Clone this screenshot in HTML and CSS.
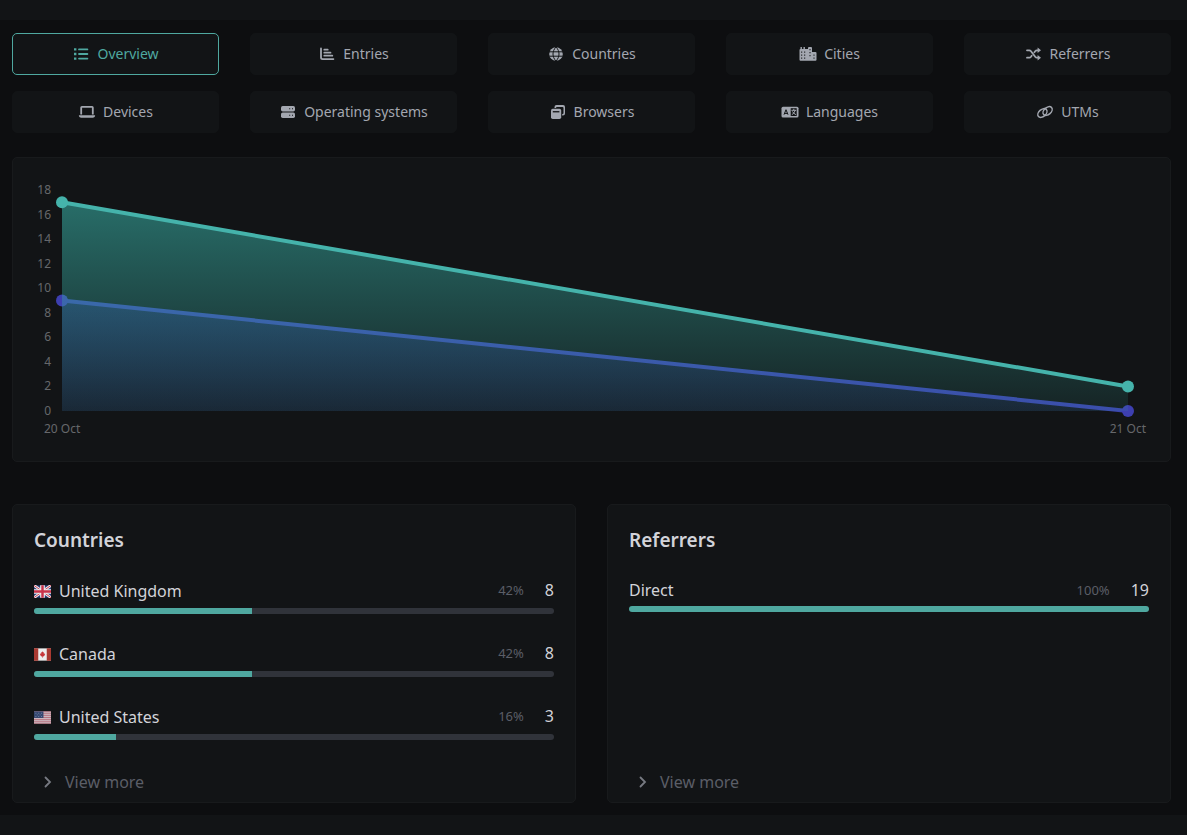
FILE: index.html
```
<!DOCTYPE html>
<html lang="en">
<head>
    <meta charset="UTF-8">
    <meta name="viewport" content="width=device-width, initial-scale=1.0">
    <title>Analytics</title>
    <link rel="stylesheet" href="styles.css">
</head>
<body>
    <header class="topbar"></header>

    <main>
        <nav class="tabs">
            <a href="#overview" class="tab active">
                <svg class="icon" viewBox="0 0 18 14"><path d="M2 1.2h2.4v2.4H2zM2 5.8h2.4v2.4H2zM2 10.4h2.4v2.4H2z"/><path class="line" d="M7 2.4h8.4M7 7h8.4M7 11.6h8.4"/></svg>
                Overview
            </a>
            <a href="#entries" class="tab">
                <svg class="icon" viewBox="0 0 18 14"><path class="line" d="M3 1.5v9q0 1.6 1.6 1.6H15.4M6.3 2.7h3.4M6.3 5.7h6.2M6.3 8.7h8"/></svg>
                Entries
            </a>
            <a href="#countries" class="tab">
                <svg class="icon" viewBox="0 0 18 14"><circle cx="9" cy="7" r="6.8"/><path class="cut" d="M2.2 4.8h13.6M2.2 9.2h13.6M9 0c-4 4-4 10 0 14M9 0c4 4 4 10 0 14"/></svg>
                Countries
            </a>
            <a href="#cities" class="tab">
                <svg class="icon" viewBox="0 0 18 14"><path d="M1.5 0h1.4v2h1.6V0h1.4v2H9V1q0-1 1-1h2q1 0 1 1v4h3.5q1 0 1 1v6.8q0 1-1 1H1.5q-1 0-1-1V3q0-1 1-1z"/><path class="hole" d="M2.2 4.4h1v1.300h-1zM5.200 4.400h1v1.300h-1zM2.200 7.400h1v1.300h-1zM5.200 7.400h1v1.300h-1zM2.200 10.400h1v1.300h-1zM5.200 10.400h1v1.300h-1zM10.500 2h1v1.300h-1zM10.500 5h1v1.300h-1zM10.500 8h1v1.300h-1zM14.500 7.400h1v1.300h-1zM14.500 10.400h1v1.300h-1z"/></svg>
                Cities
            </a>
            <a href="#referrers" class="tab">
                <svg class="icon" viewBox="0 0 18 14"><path class="line" d="M2 3.300h2.300q1 0 1.700.9l4.200 5.600q.7.900 1.700.9H13M2 10.700h2.300q1 0 1.700-.9l.7-1M9.400 5.300l.8-1.100q.7-.9 1.700-.9H13"/><path d="M12.600.5 16 3.300l-3.400 2.800zM12.600 7.900 16 10.700l-3.400 2.800z"/></svg>
                Referrers
            </a>
            <a href="#devices" class="tab">
                <svg class="icon" viewBox="0 0 18 14"><path d="M2.300 2.600Q2.300 1 3.900 1h10.200q1.600 0 1.600 1.600V9.500h-1.800V2.800H4.100v6.700H2.300zM.8 10.300h16.400q0 2.400-2.200 2.400H3Q.8 12.700.8 10.300z"/></svg>
                Devices
            </a>
            <a href="#systems" class="tab">
                <svg class="icon" viewBox="0 0 18 14"><rect x="2" y="1" width="14" height="5.400" rx="1.700"/><rect x="2" y="7.600" width="14" height="5.400" rx="1.700"/><path class="hole" d="M10.200 3.200h1v1h-1zM13 3.200h1v1h-1zM10.200 9.800h1v1h-1zM13 9.800h1v1h-1z"/></svg>
                Operating systems
            </a>
            <a href="#browsers" class="tab">
                <svg class="icon" viewBox="0 0 18 14"><path d="M5.500 3V2q0-2 2-2H14q2 0 2 2v6.500q0 2-2 2h-.8V9h.3q1 0 1-1V3q0-1-1-1H8q-1 0-1 1z"/><path d="M3.700 3.700h6.800q1.700 0 1.700 1.700v6.900q0 1.700-1.700 1.700H3.700Q2 14 2 12.300V5.400q0-1.700 1.700-1.700z"/><path class="hole" d="M3.800 6.100h6.600v1.300H3.800z"/></svg>
                Browsers
            </a>
            <a href="#languages" class="tab">
                <svg class="icon" viewBox="0 0 18 14"><rect x=".5" y="1.700" width="17" height="10.800" rx="1.500"/><path class="hole" d="M9.700 3.200h6v7.800h-6z"/><path class="cut" d="m3 9.700 2-5 2 5M3.700 8.400h2.600"/><path class="line thin" d="M10.800 5.300h4M12.800 4.200v1M14.200 5.500q-.8 2.800-3 4M11.600 6.800q.9 1.800 3 2.700"/></svg>
                Languages
            </a>
            <a href="#utms" class="tab">
                <svg class="icon" viewBox="0 0 18 14"><g class="line chain"><ellipse cx="6.400" cy="8" rx="5.300" ry="3.500" transform="rotate(-42 6.400 8)"/><ellipse cx="11.600" cy="6" rx="5.300" ry="3.500" transform="rotate(-42 11.600 6)"/></g></svg>
                UTMs
            </a>
        </nav>

        <section class="card chart">
            <div class="y-axis">
                <span>18</span>
                <span>16</span>
                <span>14</span>
                <span>12</span>
                <span>10</span>
                <span>8</span>
                <span>6</span>
                <span>4</span>
                <span>2</span>
                <span>0</span>
            </div>
            <svg class="plot" role="img" aria-label="Views and visitors, 20 Oct to 21 Oct">
                <defs>
                    <linearGradient id="viewsFill" gradientUnits="userSpaceOnUse" x1="0" y1="0" x2="0" y2="18">
                        <stop class="views-top" offset="0"/>
                        <stop class="views-bottom" offset="1"/>
                    </linearGradient>
                    <linearGradient id="visitorsFill" gradientUnits="userSpaceOnUse" x1="0" y1="0" x2="0" y2="18">
                        <stop class="visitors-top" offset="0"/>
                        <stop class="visitors-bottom" offset="1"/>
                    </linearGradient>
                </defs>
                <!-- visitors: 9 to 0 -->
                <svg class="series" viewBox="0 0 100 18" preserveAspectRatio="none">
                    <path fill="url(#visitorsFill)" d="M0 9 100 18H0z"/>
                    <path class="visitors-line" d="M0 9 100 18"/>
                </svg>
                <circle class="visitors-dot" cx="0" cy="50%" r="6"/>
                <circle class="visitors-dot" cx="100%" cy="100%" r="6"/>
                <!-- views: 17 to 2 -->
                <svg class="series" viewBox="0 0 100 18" preserveAspectRatio="none">
                    <path fill="url(#viewsFill)" d="M0 1 100 16V18H0z"/>
                    <path class="views-line" d="M0 1 100 16"/>
                </svg>
                <circle class="views-dot" cx="0" cy="5.56%" r="6"/>
                <circle class="views-dot" cx="100%" cy="88.89%" r="6"/>
            </svg>
            <div class="x-axis">
                <span>20 Oct</span>
                <span>21 Oct</span>
            </div>
        </section>

        <div class="panels">
            <section class="card panel">
                <h2>Countries</h2>
                <ul class="stats">
                    <li>
                        <div class="stat">
                            <span class="name with-flag">
                                <svg class="flag" viewBox="0 0 18 13"><path fill="#2b3f7c" d="M0 0h18v13H0z"/><path stroke="#eee" stroke-width="3" d="m0 0 18 13M18 0 0 13"/><path stroke="#c8334a" d="m0 0 18 13M18 0 0 13"/><path stroke="#eee" stroke-width="5" d="M9 0v13M0 6.500h18"/><path stroke="#c8334a" stroke-width="2.600" d="M9 0v13M0 6.500h18"/></svg>
                                United Kingdom
                            </span>
                            <span class="percent">42%</span>
                            <span class="count">8</span>
                        </div>
                        <div class="bar"><div class="fill" style="width: 42%"></div></div>
                    </li>
                    <li>
                        <div class="stat">
                            <span class="name with-flag">
                                <svg class="flag" viewBox="0 0 18 13"><path fill="#eee" d="M0 0h18v13H0z"/><path fill="#a93a32" d="M0 0h4.500v13H0zM13.500 0H18v13h-4.500z"/><path fill="#c8373a" d="m9 3 .8 1.400.8-.2-.2 1.700 1.300-.7-.3 1.200.5.400-1.900 1.700H9.300v1.500h-.6V8.500H8L6.100 6.800l.5-.4-.3-1.200 1.300.7-.2-1.700.8.200z"/></svg>
                                Canada
                            </span>
                            <span class="percent">42%</span>
                            <span class="count">8</span>
                        </div>
                        <div class="bar"><div class="fill" style="width: 42%"></div></div>
                    </li>
                    <li>
                        <div class="stat">
                            <span class="name with-flag">
                                <svg class="flag" viewBox="0 0 18 13"><path fill="#cfc0c8" d="M0 0h18v13H0z"/><path stroke="#b5707c" d="M0 .5h18M0 2.500h18M0 4.500h18M0 6.500h18M0 8.500h18M0 10.500h18M0 12.500h18"/><path fill="#35476f" d="M0 0h10v7H0z"/><path fill="#6f80a6" d="M1.500 1.500h1v1h-1zM4.500 1.500h1v1h-1zM7.500 1.500h1v1h-1zM3 3.200h1v1H3zM6 3.200h1v1H6zM1.500 5h1v1h-1zM4.500 5h1v1h-1zM7.500 5h1v1h-1z"/></svg>
                                United States
                            </span>
                            <span class="percent">16%</span>
                            <span class="count">3</span>
                        </div>
                        <div class="bar"><div class="fill" style="width: 15.8%"></div></div>
                    </li>
                </ul>
                <a href="#countries" class="more">
                    <svg class="chevron" viewBox="0 0 8 12"><path d="m1.500 1.500 4.500 4.500-4.500 4.500"/></svg>
                    View more
                </a>
            </section>

            <section class="card panel">
                <h2>Referrers</h2>
                <ul class="stats">
                    <li>
                        <div class="stat">
                            <span class="name">Direct</span>
                            <span class="percent">100%</span>
                            <span class="count">19</span>
                        </div>
                        <div class="bar"><div class="fill" style="width: 100%"></div></div>
                    </li>
                </ul>
                <a href="#referrers" class="more">
                    <svg class="chevron" viewBox="0 0 8 12"><path d="m1.500 1.500 4.500 4.500-4.500 4.500"/></svg>
                    View more
                </a>
            </section>
        </div>
    </main>

    <footer class="bottombar"></footer>
</body>
</html>
```
FILE: styles.css
```
:root {
    --bg: #0d0e10;
    --card: #121416;
    --border: #181a1c;
    --teal: #4fa8a0;
    --text: #d2d3d9;
    --muted: #a3a7b0;
    --dim: #5b5e67;
}

* {
    box-sizing: border-box;
}

body {
    margin: 0;
    background-color: var(--bg);
    color: var(--text);
    font-family: "Noto Sans", "Open Sans", sans-serif;
    font-size: 16px;
    line-height: 24px;
}

a {
    text-decoration: none;
}

.topbar,
.bottombar {
    height: 20px;
    background-color: var(--card);
}

main {
    padding: 13px 16px 12px 12px;
}

/* Tabs */
.tabs {
    display: grid;
    grid-template-columns: repeat(5, 1fr);
    gap: 16px 31px;
}

.tab {
    display: flex;
    align-items: center;
    justify-content: center;
    gap: 7px;
    height: 42px;
    border: 1px solid var(--card);
    border-radius: 5px;
    background-color: var(--card);
    color: var(--muted);
    font-size: 14px;
}

.tab.active {
    border-color: var(--teal);
    color: var(--teal);
}

.icon {
    width: 18px;
    height: 14px;
    fill: currentColor;
}

.icon .line {
    fill: none;
    stroke: currentColor;
    stroke-width: 1.8;
    stroke-linecap: round;
}

.icon .chain {
    stroke-width: 1.5;
}

.icon .thin {
    stroke-width: 1;
}

.icon .cut {
    fill: none;
    stroke: var(--card);
    stroke-width: 1;
}

.icon .hole {
    fill: var(--card);
}

.card {
    border: 1px solid var(--border);
    border-radius: 5px;
    background-color: var(--card);
}

/* Chart */
.chart {
    display: grid;
    grid-template-columns: 14px 1fr;
    column-gap: 11px;
    margin-top: 24px;
    padding: 20px 42px 23px 24px;
    color: #66686b;
    font-size: 12px;
    line-height: 18px;
}

.y-axis {
    display: flex;
    flex-direction: column;
    height: 245px;
}

.y-axis span {
    display: flex;
    flex: 1;
    align-items: center;
    justify-content: flex-end;
}

.plot {
    width: 100%;
    height: 221px;
    margin: 12px 0;
    overflow: visible;
}

.series {
    overflow: visible;
}

.x-axis {
    display: flex;
    grid-column: 2;
    justify-content: space-between;
    margin: -3px -18px 0;
}

.views-line,
.visitors-line {
    fill: none;
    stroke-width: 4;
    vector-effect: non-scaling-stroke;
}

.views-line {
    stroke: #45b3ab;
}

.views-dot {
    fill: #45b3ab;
}

.views-top {
    stop-color: #38b0a6;
    stop-opacity: 0.6;
}

.views-bottom {
    stop-color: #38b0a6;
    stop-opacity: 0.1;
}

.visitors-line {
    stroke: #3b43ac;
}

.visitors-dot {
    fill: #3d3fb0;
}

.visitors-top {
    stop-color: #3540bc;
    stop-opacity: 0.6;
}

.visitors-bottom {
    stop-color: #3540bc;
    stop-opacity: 0.12;
}

/* Panels */
.panels {
    display: grid;
    grid-template-columns: 1fr 1fr;
    gap: 31px;
    margin-top: 42px;
}

.panel {
    display: flex;
    flex-direction: column;
    padding: 20px 21px 8px;
}

.panel h2 {
    margin: 0 0 23px;
    font-size: 19px;
    font-weight: 600;
    line-height: 30px;
}

.stats {
    display: flex;
    flex-direction: column;
    gap: 27px;
    margin: 0 0 30px;
    padding: 0;
    list-style: none;
}

.stat {
    display: flex;
    margin-bottom: 4px;
}

.name {
    margin-right: auto;
}

.with-flag {
    display: flex;
    align-items: center;
    gap: 8px;
    line-height: 26px;
}

.flag {
    width: 17px;
    height: 13px;
    fill: none;
}

.percent {
    color: var(--dim);
    font-size: 13px;
}

.count {
    margin-left: 21px;
}

.bar {
    height: 6px;
    border-radius: 3px;
    background-color: #30333a;
    overflow: hidden;
}

.fill {
    height: 100%;
    background-color: var(--teal);
}

.more {
    display: flex;
    align-items: center;
    gap: 13px;
    margin-top: auto;
    padding-left: 10px;
    color: var(--dim);
}

.chevron {
    width: 8px;
    height: 12px;
    fill: none;
    stroke: #777a82;
    stroke-width: 1.8;
    stroke-linecap: round;
}
```
